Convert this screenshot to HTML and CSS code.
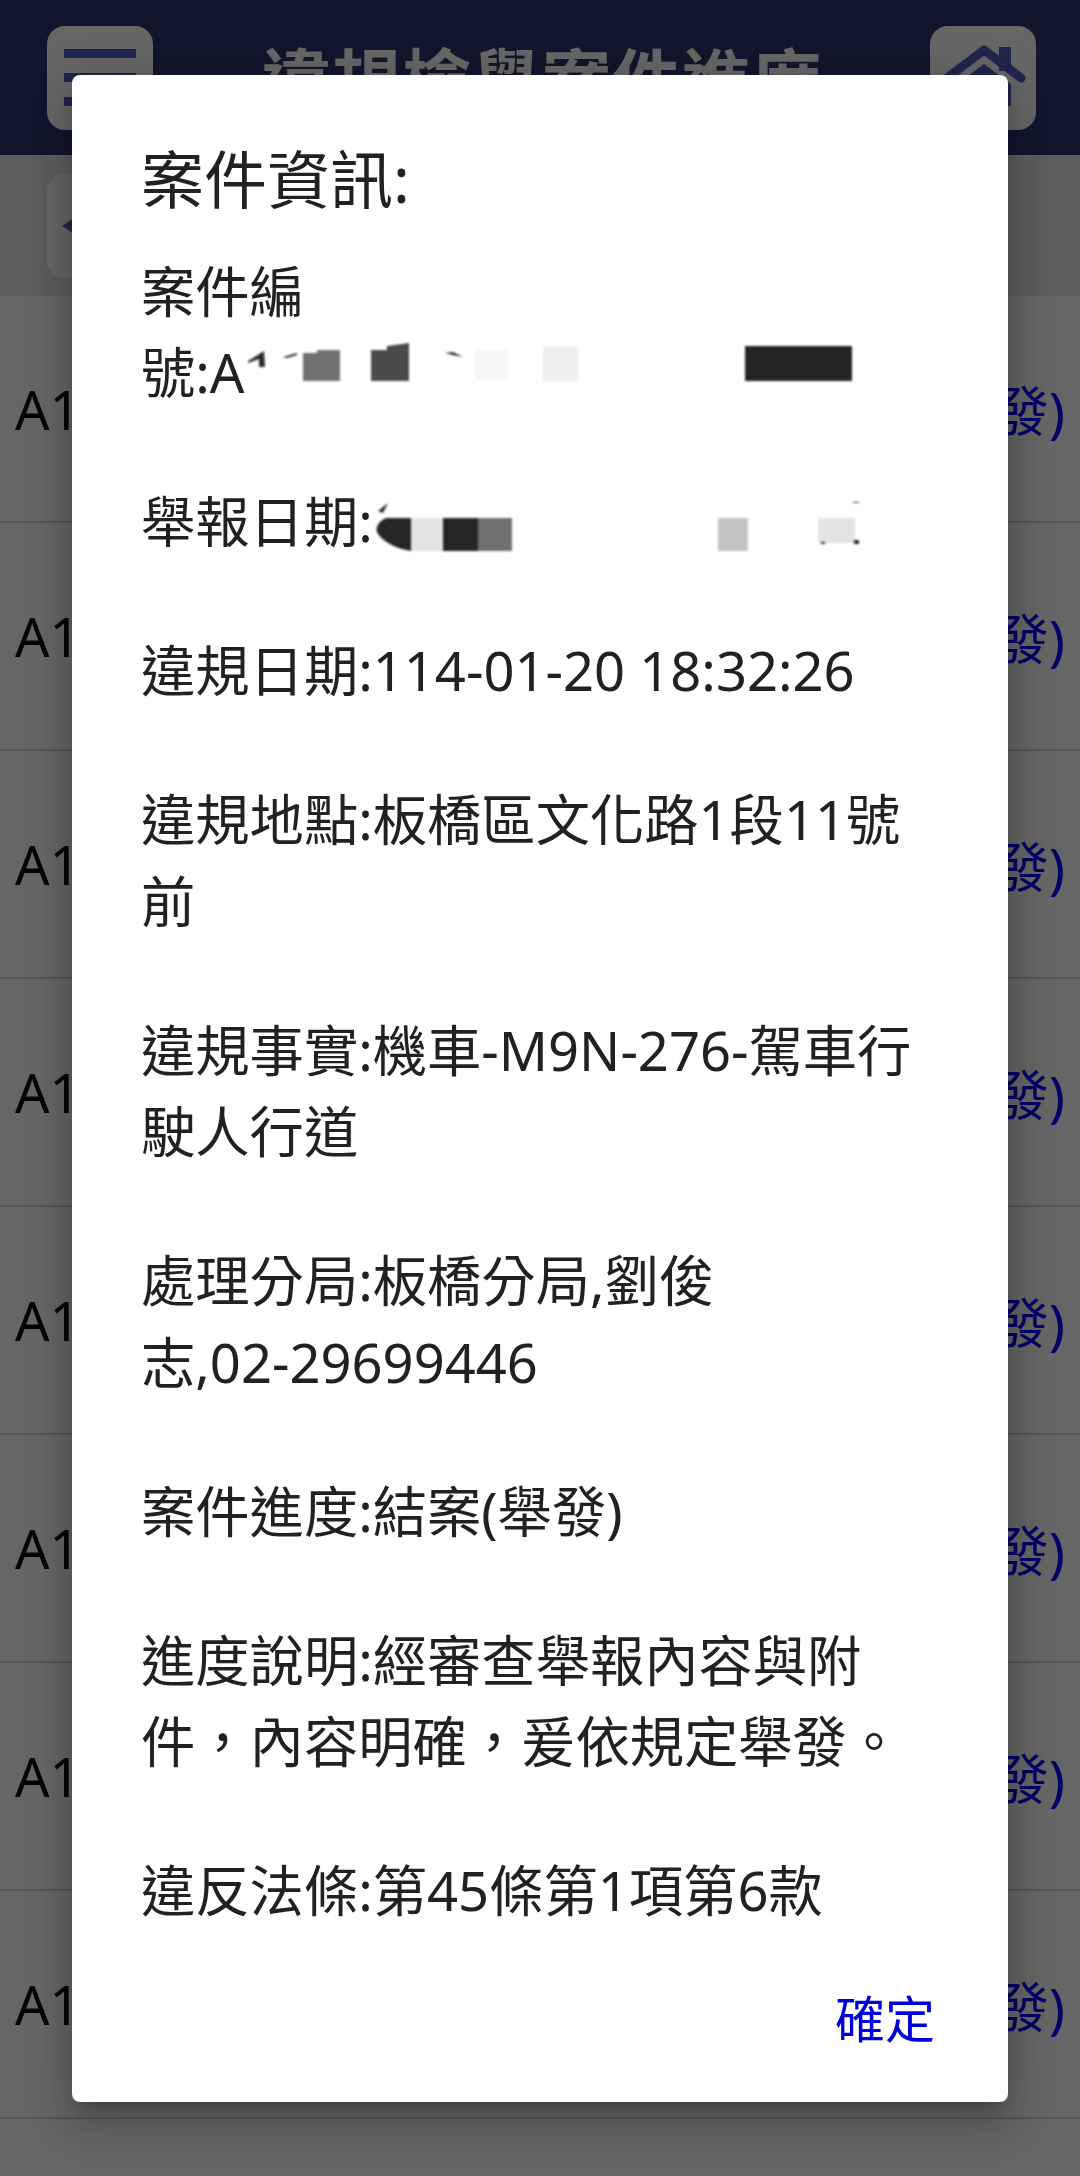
FILE: index.html
```html
<!DOCTYPE html>
<html lang="zh-Hant">

<head>
    <meta charset="UTF-8">
    <meta name="viewport" content="width=device-width, initial-scale=1.0">
    <title>違規檢舉案件進度</title>
    <link rel="stylesheet" href="styles.css">
</head>

<body>
    <div class="topbar">
        <div class="icon-btn">
            <div class="menu-lines">
                <span></span>
                <span></span>
                <span></span>
            </div>
        </div>
        <div class="page-title">違規檢舉案件進度</div>
        <div class="icon-btn">
            <svg class="home-icon" viewBox="0 0 106 104">
                <rect x="69" y="21" width="12" height="24" />
                <polyline points="17,52 54,24 91,52" />
                <polygon points="54,38 81,58 81,80 27,80 27,58" />
            </svg>
        </div>
    </div>

    <div class="subbar">
        <div class="icon-btn back-btn">
            <svg class="back-icon" viewBox="0 0 40 44">
                <polygon points="0,22 30,2 30,42" />
            </svg>
        </div>
    </div>

    <div class="list">
        <div class="row"><span class="case-no">A1</span><a class="case-state">結案(舉發)</a></div>
        <div class="row"><span class="case-no">A1</span><a class="case-state">結案(舉發)</a></div>
        <div class="row"><span class="case-no">A1</span><a class="case-state">結案(舉發)</a></div>
        <div class="row"><span class="case-no">A1</span><a class="case-state">結案(舉發)</a></div>
        <div class="row"><span class="case-no">A1</span><a class="case-state">結案(舉發)</a></div>
        <div class="row"><span class="case-no">A1</span><a class="case-state">結案(舉發)</a></div>
        <div class="row"><span class="case-no">A1</span><a class="case-state">結案(舉發)</a></div>
        <div class="row"><span class="case-no">A1</span><a class="case-state">結案(舉發)</a></div>
    </div>

    <div class="overlay">
        <div class="dialog">
            <div class="dialog-title">案件資訊:</div>
            <div class="dialog-body">
                <p>案件編<span class="keep">號:A<svg class="mosaic mosaic-no" viewBox="0 0 613 58">
                    <polygon fill="#2a2a2a" points="3,26 19,16 20,32 14,32 14,24 3,28" />
                    <polygon fill="#2a2a2a" points="38,22 52,18 52,20 42,23" />
                    <polygon fill="#2a2a2a" points="200,18 208,17 218,22 208,20" />
                    <polygon fill="#2a2a2a" points="233,22 243,17 248,19 240,20" />
                    <polygon fill="#707070" points="58,18 72,18 72,15 95,15 95,46 58,46" />
                    <polygon fill="#4a4a4a" points="126,15 142,15 142,11 164,8 164,46 126,46" />
                    <rect fill="#f6f6f6" x="230" y="15" width="33" height="31" />
                    <rect fill="#eeeeee" x="298" y="11" width="35" height="35" />
                    <rect fill="#242424" x="500" y="11" width="107" height="35" />
                </svg></span></p>
                <p><span class="keep">舉報日期:<svg class="mosaic mosaic-date" viewBox="0 0 488 57">
                    <polygon fill="#2a2a2a" points="5,15 15,7 10,17" />
                    <path fill="#252525" d="M13 22H38V55C26 53 12 48 5 38C1 32 6 25 13 22Z" />
                    <rect fill="#e4e4e4" x="38" y="22" width="32" height="33" />
                    <rect fill="#252525" x="70" y="22" width="35" height="33" />
                    <rect fill="#707070" x="105" y="22" width="34" height="33" />
                    <rect fill="#c4c4c4" x="345" y="22" width="30" height="33" />
                    <rect fill="#e4e4e4" x="445" y="22" width="37" height="25" />
                    <rect fill="#2a2a2a" x="480" y="6" width="6" height="1" />
                    <rect fill="#2a2a2a" x="448" y="46" width="4" height="2" />
                    <rect fill="#2a2a2a" x="481" y="44" width="5" height="4" />
                </svg></span></p>
                <p>違規日期:114-01-20 18:32:26</p>
                <p>違規地點:板橋區文化路1段11號前</p>
                <p>違規事實:機車-M9N-276-駕車行駛人行道</p>
                <p>處理分局:板橋分局,劉俊<span class="keep">志,02-29699446</span></p>
                <p>案件進度:結案(舉發)</p>
                <p>進度說明:經審查舉報內容與附件&#xFF0C;內容明確&#xFF0C;爰依規定舉發。</p>
                <p>違反法條:第45條第1項第6款</p>
            </div>
            <div class="dialog-actions">
                <div class="ok-btn">確定</div>
            </div>
        </div>
    </div>
</body>

</html>
```

FILE: styles.css
```css
* {
    box-sizing: border-box;
}

body {
    margin: 0px;
    padding: 0px;
    width: 1080px;
    height: 2176px;
    overflow: hidden;
    position: relative;
    background-color: #ffffff;
    font-family: "Noto Sans", "Noto Sans CJK TC", sans-serif;
}

.topbar {
    height: 155px;
    padding: 0px 44px 0px 47px;
    background-color: #2f376e;
    display: flex;
    justify-content: space-between;
    align-items: center;
}

.icon-btn {
    width: 106px;
    height: 104px;
    border-radius: 18px;
    background-color: #ffffff;
    display: flex;
    justify-content: center;
    align-items: center;
}

.menu-lines {
    width: 72px;
    display: flex;
    flex-direction: column;
    gap: 15px;
}

.menu-lines span {
    height: 9px;
    background-color: #505fbe;
}

.page-title {
    font-size: 70px;
    font-weight: bold;
    color: #ffffff;
}

.home-icon {
    width: 106px;
    height: 104px;
    fill: #505fbe;
}

.home-icon polyline {
    fill: none;
    stroke: #505fbe;
    stroke-width: 9;
    stroke-linecap: round;
    stroke-linejoin: round;
}

.subbar {
    height: 141px;
    padding: 0px 47px;
    background-color: #e8e8e8;
    display: flex;
    align-items: center;
}

.back-btn {
    justify-content: flex-start;
    padding-left: 15px;
}

.back-icon {
    width: 40px;
    height: 44px;
    fill: #505fbe;
}

.row {
    height: 228px;
    padding: 0px 15px 0px 15px;
    border-bottom: 2px solid #d4d4d4;
    display: flex;
    justify-content: space-between;
    align-items: center;
    font-size: 54px;
}

.row:first-child {
    height: 227px;
}

.case-no {
    color: #0c0c0c;
}

.case-state {
    color: #0000ff;
    text-decoration: none;
}

.overlay {
    position: absolute;
    top: 0px;
    left: 0px;
    width: 100%;
    height: 100%;
    background-color: rgba(0, 0, 0, 0.6);
    display: flex;
    justify-content: center;
    align-items: center;
}

.dialog {
    width: 936px;
    padding: 64px 73px 51px 69px;
    background-color: #ffffff;
    border-radius: 8px;
    box-shadow: 0 24px 38px 3px rgba(0, 0, 0, 0.14), 0 9px 46px 8px rgba(0, 0, 0, 0.12), 0 11px 15px -7px rgba(0, 0, 0, 0.2);
}

.dialog-title {
    font-size: 63px;
    line-height: 80px;
    color: #212121;
    margin-bottom: 32px;
}

.dialog-body {
    font-size: 54.3px;
    line-height: 81.5px;
    color: #212121;
    margin-right: -4px;
}

.dialog-body p {
    margin: 0px 0px 67.5px 0px;
}

.dialog-body p:last-child {
    margin-bottom: 0px;
}

.keep {
    white-space: nowrap;
}

.mosaic {
    filter: blur(1px);
}

.mosaic-no {
    width: 613px;
    height: 58px;
    vertical-align: baseline;
}

.mosaic-date {
    width: 488px;
    height: 57px;
    vertical-align: -11px;
}

.dialog-actions {
    margin-top: 55px;
    display: flex;
    justify-content: flex-end;
}

.ok-btn {
    font-size: 50px;
    line-height: 64px;
    color: #0000d6;
}
```
